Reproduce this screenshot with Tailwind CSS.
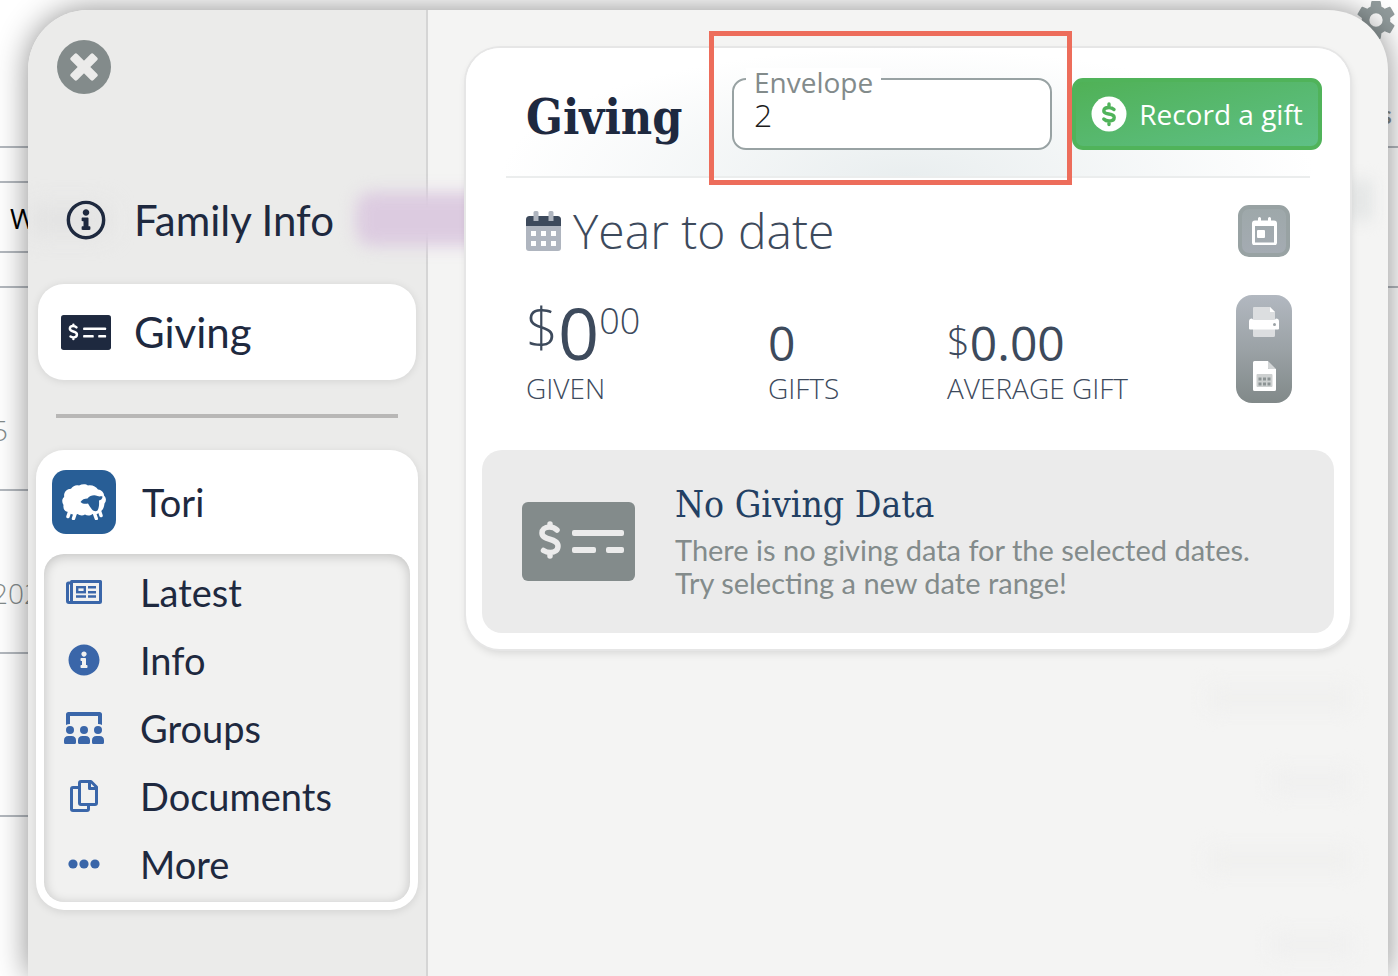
<!DOCTYPE html>
<html lang="en">
  <head>
    <meta charset="utf-8" />
    <meta content="width=device-width, initial-scale=1" name="viewport" />
    <title>Giving</title>
    <script src="https://cdn.jsdelivr.net/npm/@tailwindcss/browser@4"></script>
  </head>

  <body
    class="relative h-screen overflow-hidden bg-white font-['Open_Sans',sans-serif] text-[#1e293f]"
  >
    <!-- Shared icons -->
    <svg class="absolute h-0 w-0" aria-hidden="true">
      <symbol id="check" viewBox="0 0 113 79">
        <mask id="checkMask" maskUnits="userSpaceOnUse" x="0" y="0" width="113" height="79">
          <rect width="113" height="79" rx="6" fill="#fff" />
          <g fill="#000">
            <rect x="50" y="28" width="52" height="6" rx="2" />
            <rect x="50" y="45" width="24" height="6" rx="2" />
            <rect x="84" y="45" width="18" height="6" rx="2" />
          </g>
          <path
            d="M35 28C33 26 30 25 27.500 25C22.500 25 20 28 20 31C20 39 36 35.500 36 44C36 48.500 32.500 50.500 28.500 50.500C25 50.500 23 49.500 21.500 48.500M28 22v3M28 51v3"
            fill="none"
            stroke="#000"
            stroke-width="5.500"
            stroke-linecap="round"
          />
        </mask>
        <rect width="113" height="79" fill="currentColor" mask="url(#checkMask)" />
      </symbol>
    </svg>

    <!-- Page behind the panel -->
    <div class="h-full overflow-hidden text-2xl text-[#838b8b]">
      <header class="flex h-[148px] justify-end border-b-2 border-[#b3b8be]">
        <div class="flex w-11 flex-col items-center pt-px">
          <button type="button" aria-label="Settings" class="text-[#929c9d]">
            <svg class="h-[38px] w-[38px]" viewBox="2 2 20 20" fill="currentColor">
              <path
                d="M12 15.500A3.500 3.500 0 0 1 8.500 12A3.500 3.500 0 0 1 12 8.500a3.500 3.500 0 0 1 3.500 3.500a3.500 3.500 0 0 1-3.500 3.500m7.430-2.530c.04-.32.07-.64.07-.97c0-.33-.03-.66-.07-1l2.110-1.630c.19-.15.24-.42.12-.64l-2-3.460c-.12-.22-.39-.31-.61-.22l-2.490 1c-.52-.39-1.060-.73-1.690-.98l-.37-2.650A.506.506 0 0 0 14 2h-4c-.25 0-.46.18-.5.42l-.37 2.650c-.63.25-1.170.59-1.690.98l-2.490-1c-.22-.09-.49 0-.61.22l-2 3.460c-.13.22-.07.49.12.64L4.570 11c-.04.34-.07.67-.07 1c0 .33.03.65.07.97l-2.110 1.660c-.19.15-.25.42-.12.64l2 3.460c.12.22.39.3.61.22l2.490-1.010c.52.4 1.060.74 1.690.99l.37 2.650c.04.24.25.42.5.42h4c.25 0 .46-.18.5-.42l.37-2.650c.63-.26 1.170-.59 1.690-.99l2.490 1.010c.22.08.49 0 .61-.22l2-3.460c.12-.22.07-.49-.12-.64l-2.110-1.660Z"
              />
            </svg>
          </button>
          <span class="mt-[60px] ml-5 font-semibold">s</span>
        </div>
      </header>
      <div class="h-[35px] w-1/2 border-b-2 border-[#b3b8be]"></div>
      <div
        class="flex h-[70px] w-1/2 items-center border-b-2 border-[#b3b8be] pt-1 pl-[10px] text-[28px] text-black"
      >
        W
      </div>
      <div class="h-[35px] border-b-2 border-[#b3b8be]"></div>
      <div
        class="flex h-[203px] w-1/2 items-end border-b-2 border-[#b3b8be] pb-10 text-[28px] font-light"
      >
        <span class="-ml-2">5</span>
      </div>
      <div
        class="flex h-[163px] w-1/2 items-end border-b-2 border-[#b3b8be] pb-10 text-[28px] font-light"
      >
        <span class="-ml-2">2025</span>
      </div>
      <div class="h-[163px] w-1/2 border-b-2 border-[#b3b8be]"></div>
    </div>

    <!-- Panel -->
    <div
      class="absolute top-[10px] right-[10px] bottom-0 left-7 flex overflow-hidden rounded-t-[60px] bg-[#f4f4f3] shadow-[0_0_32px_rgba(0,0,0,0.45)]"
    >
      <!-- Soft shapes showing through the panel -->
      <div class="pointer-events-none absolute inset-0" aria-hidden="true">
        <div class="absolute top-[182px] left-[328px] z-10 h-[54px] w-48 rounded-2xl bg-[#dccbe0] blur-[8px]"></div>
        <div class="absolute top-[196px] left-0 z-10 h-7 w-20 bg-[#e2e2e2] blur-[12px]"></div>
        <div class="absolute top-[170px] right-4 h-10 w-6 bg-[#e3e5e5] blur-[8px]"></div>
        <div class="absolute top-[678px] right-9 h-5 w-36 bg-[#efefee] blur-[10px]"></div>
        <div class="absolute top-[762px] right-9 h-5 w-20 bg-[#efefef] blur-[10px]"></div>
        <div class="absolute top-[840px] right-9 h-5 w-36 bg-[#efefee] blur-[10px]"></div>
        <div class="absolute top-[925px] right-9 h-5 w-20 bg-[#efefef] blur-[10px]"></div>
      </div>

      <!-- Sidebar -->
      <aside
        class="w-[400px] shrink-0 border-r-2 border-[#d5d5d5] bg-[#ebebea] px-2 pt-[30px] font-[Lato,sans-serif] text-[42px]"
      >
        <button
          type="button"
          aria-label="Close"
          class="ml-[21px] flex h-[54px] w-[54px] items-center justify-center rounded-full bg-[#838b8b] text-[#ebebea]"
        >
          <svg class="h-7 w-7" viewBox="0 0 28 28" fill="currentColor">
            <rect x="-2" y="9.500" width="32" height="9" rx="2" transform="rotate(45 14 14)" />
            <rect x="-2" y="9.500" width="32" height="9" rx="2" transform="rotate(-45 14 14)" />
          </svg>
        </button>

        <nav class="relative z-20 mx-[2px] mt-[78px] space-y-4">
          <a href="#" class="flex h-24 items-center gap-[23px] pl-[23px]">
            <span class="flex w-[50px] justify-center">
              <svg class="h-10 w-10" viewBox="0 0 512 512" fill="currentColor">
                <circle cx="256" cy="256" r="226" fill="none" stroke="currentColor" stroke-width="44" />
                <path
                  d="M256 118c23.196 0 42 18.804 42 42s-18.804 42-42 42-42-18.804-42-42 18.804-42 42-42zm56 254c0 6.627-5.373 12-12 12h-88c-6.627 0-12-5.373-12-12v-24c0-6.627 5.373-12 12-12h12v-64h-12c-6.627 0-12-5.373-12-12v-24c0-6.627 5.373-12 12-12h64c6.627 0 12 5.373 12 12v100h12c6.627 0 12 5.373 12 12v24z"
                />
              </svg>
            </span>
            Family Info
          </a>
          <a
            href="#"
            aria-current="page"
            class="flex h-24 items-center gap-[23px] rounded-[26px] bg-white pl-[23px] shadow-[0_1px_8px_rgba(0,0,0,0.1)]"
          >
            <svg class="h-[35px] w-[50px]"><use href="#check" /></svg>
            Giving
          </a>
        </nav>

        <hr class="mx-5 mt-[34px] mb-8 border-t-4 border-[#b8b7b6]" />

        <section class="rounded-[28px] bg-white p-2 text-[38px] shadow-[0_2px_8px_rgba(0,0,0,0.1)]">
          <a href="#" class="flex h-24 items-center gap-[26px] px-2 pb-2">
            <span class="flex h-16 w-16 items-center justify-center rounded-[14px] bg-[#285e96] text-white">
              <svg class="h-9 w-11" viewBox="0 0 44 36" fill="currentColor">
                <path
                  d="M7.500 28l-1.500 4.500M13 30l-1.500 4.500M32.500 29.500l1.800 5M37.500 27l1.500 4.500"
                  stroke="currentColor"
                  stroke-width="3.500"
                  stroke-linecap="round"
                />
                <path
                  d="M1.500 21C-.5 18 0 14.500 2.200 13C1.500 8.500 4.500 5 9 4.800C11 1.800 14 .5 17 1.500C20-.3 24-.3 26 1.500C30 .6 34 2.500 36 5.500C40 6 42 9 42 11.500C44.500 14 44.500 17 42.500 19.500C42 24 40.500 27 38 27.500C36 30.500 33 31 30.500 30C28 32 25 31.800 23 30.500C20.500 32 17.500 31.500 15.500 30C12 31.500 8.500 30.500 7 28C3 28 .8 25 1.500 21Z"
                />
                <path
                  d="M18.500 18C20 15.500 22.500 14.500 25.500 14.500C28 11.500 32 10.500 35.500 12C37.500 12.800 39 12 40.500 12.500C40.500 14.800 39 16.200 37 16.500C37.300 20.500 37 24 35.500 26.500C34 27.800 31.500 27.300 30 25.500C28.500 23.500 27 21.500 26 19.500C23.500 20 20.500 20 18.500 18Z"
                  fill="#285e96"
                />
              </svg>
            </span>
            Tori
          </a>
          <nav
            class="rounded-[20px] bg-[#f1f1f0] py-1 shadow-[inset_0_2px_12px_rgba(0,0,0,0.2)]"
          >
            <a href="#" class="flex h-[68px] items-center gap-9 pl-5">
              <span class="flex w-10 justify-center text-[#3a66a9]">
                <svg class="h-6 w-9" viewBox="0 0 36 24" fill="none" stroke="currentColor">
                  <path d="M5.500 3H2.500Q1.500 3 1.500 4V21Q1.500 22.500 3 22.500H33.500Q34.500 22.500 34.500 21.500V1.500H5.500V22" stroke-width="3" stroke-linejoin="round" />
                  <rect x="11.200" y="7.200" width="7.600" height="5" stroke-width="2.400" />
                  <path d="M22 7.300h8M22 12.200h8M22 16.500h8M10 16.500h10" stroke-width="2.600" />
                </svg>
              </span>
              Latest
            </a>
            <a href="#" class="flex h-[68px] items-center gap-9 pl-5">
              <span class="flex w-10 justify-center text-[#3a66a9]">
                <svg class="h-8 w-8" viewBox="0 0 512 512" fill="currentColor">
                  <path
                    d="M256 8C119.043 8 8 119.083 8 256c0 136.997 111.043 248 248 248s248-111.003 248-248C504 119.083 392.957 8 256 8zm0 110c23.196 0 42 18.804 42 42s-18.804 42-42 42-42-18.804-42-42 18.804-42 42-42zm56 254c0 6.627-5.373 12-12 12h-88c-6.627 0-12-5.373-12-12v-24c0-6.627 5.373-12 12-12h12v-64h-12c-6.627 0-12-5.373-12-12v-24c0-6.627 5.373-12 12-12h64c6.627 0 12 5.373 12 12v100h12c6.627 0 12 5.373 12 12v24z"
                  />
                </svg>
              </span>
              Info
            </a>
            <a href="#" class="flex h-[68px] items-center gap-9 pl-5">
              <span class="flex w-10 justify-center text-[#3a66a9]">
                <svg class="h-8 w-10" viewBox="0 0 40 32" fill="currentColor">
                  <path d="M2 13V2.500Q2 0 4.500 0H35.500Q38 0 38 2.500V13Q36.500 12 34 12V4H6V12Q3.500 12 2 13Z" />
                  <circle cx="6" cy="18" r="4" />
                  <circle cx="20" cy="18" r="4" />
                  <circle cx="34" cy="18" r="4" />
                  <path d="M0 28.500Q0 24 4.500 24h3Q12 24 12 28.500V30.500Q12 32 10.500 32h-9Q0 32 0 30.500ZM14 28.500Q14 24 18.500 24h3Q26 24 26 28.500V30.500Q26 32 24.500 32h-9Q14 32 14 30.500ZM28 28.500Q28 24 32.500 24h3Q40 24 40 28.500V30.500Q40 32 38.500 32h-9Q28 32 28 30.500Z" />
                </svg>
              </span>
              Groups
            </a>
            <a href="#" class="flex h-[68px] items-center gap-9 pl-5">
              <span class="flex w-10 justify-center text-[#3a66a9]">
                <svg class="h-8 w-7" viewBox="0 0 28 32" fill="none" stroke="currentColor" stroke-width="3" stroke-linejoin="round">
                  <path d="M9 7.500H3Q1.500 7.500 1.500 9V29Q1.500 30.500 3 30.500H17Q18.500 30.500 18.500 29V25" />
                  <path d="M11 1.500H21L26.500 7V23Q26.500 24.500 25 24.500H11Q9.500 24.500 9.500 23V3Q9.500 1.500 11 1.500Z" />
                  <path d="M19.500 2V8.500H26" />
                </svg>
              </span>
              Documents
            </a>
            <a href="#" class="flex h-[68px] items-center gap-9 pl-5">
              <span class="flex w-10 justify-center text-[#3a66a9]">
                <svg class="h-[10px] w-8" viewBox="0 0 32 10" fill="currentColor">
                  <circle cx="5" cy="5" r="4.600" />
                  <circle cx="16" cy="5" r="4.600" />
                  <circle cx="27" cy="5" r="4.600" />
                </svg>
              </span>
              More
            </a>
          </nav>
        </section>
      </aside>

      <!-- Giving card -->
      <main class="min-w-0 grow px-[38px] pt-[38px]">
        <article
          class="relative z-20 rounded-[34px] bg-white pb-4 text-[#3d4a5c] shadow-[0_0_0_2px_#e6e6e6,1px_4px_8px_rgba(0,0,0,0.12)]"
        >
          <header
            class="flex h-[128px] items-start gap-5 rounded-t-[34px] bg-[radial-gradient(ellipse_46%_100%_at_50%_100%,#e9eeef,#ffffff)] pt-[30px] pr-7 pl-[60px]"
          >
            <h1
              class="grow font-['DejaVu_Serif_Condensed','DejaVu_Serif',serif] text-5xl leading-[78px] font-bold text-[#1e293f]"
            >
              Giving
            </h1>
            <div class="relative h-[72px] w-80 shrink-0">
              <label
                for="envelope"
                class="absolute -top-[10px] left-[14px] bg-white px-2 text-[28px] leading-7 text-[#838b8b]"
                >Envelope</label
              >
              <input
                id="envelope"
                type="text"
                value="2"
                class="h-full w-full rounded-[14px] border-2 border-[#98a2a3] bg-white px-5 text-[32px] font-light text-[#1c1c1c]"
              />
              <!-- Highlight around the envelope field -->
              <div class="pointer-events-none absolute -top-[47px] -right-5 -bottom-[35px] -left-[23px] border-5 border-[#ed6d5b]"></div>
            </div>
            <button
              type="button"
              class="flex h-[72px] w-[250px] shrink-0 items-center justify-center gap-3 rounded-[11px] border-4 border-[#50b35a] bg-linear-to-br from-[#50b156] to-[#5fc086] text-[28px] text-white"
            >
              <svg class="h-9 w-9" viewBox="0 0 36 36" fill="none">
                <circle cx="18" cy="18" r="17.500" fill="#fff" />
                <path
                  d="M23 13.500C21.500 12 19.500 11.500 18 11.500C14.500 11.500 12.800 13 12.800 15C12.800 19.500 23.200 16.500 23.200 21.500C23.200 24 21 25 18 25C16 25 14 24.300 12.800 23M18 8v3.500M18 25v3.500"
                  stroke="#50b35a"
                  stroke-width="3.400"
                  stroke-linecap="round"
                />
              </svg>
              Record a gift
            </button>
          </header>
          <hr class="mx-10 border-t-2 border-[#ebeded]" />

          <div class="mt-[27px] flex h-[52px] items-center gap-3 px-[60px]">
            <svg class="h-10 w-[35px]" viewBox="0 0 35 40">
              <path d="M0 15h35v22q0 3-3 3H3q-3 0-3-3Z" fill="#afb5bf" />
              <path d="M0 15V8.500Q0 5 3.500 5h28Q35 5 35 8.500V15Z" fill="#3d4a5c" />
              <path d="M7.500 1.500q0-1.500 1.500-1.500h2q1.500 0 1.500 1.500V10h-5ZM22.500 1.500q0-1.500 1.500-1.500h2q1.500 0 1.500 1.500V10h-5Z" fill="#afb5bf" />
              <path d="M5 20h5v5h-5ZM15 20h5v5h-5ZM25 20h5v5h-5ZM5 30h5v5h-5ZM15 30h5v5h-5ZM25 30h5v5h-5Z" fill="#fff" />
            </svg>
            <h2 class="grow text-5xl font-light">Year to date</h2>
            <button
              type="button"
              aria-label="Choose dates"
              class="flex h-[52px] w-[52px] items-center justify-center rounded-[11px] border-4 border-[#98a2a3] bg-linear-to-b from-[#9ea8aa] to-[#a4abb2]"
            >
              <svg class="h-7 w-[25px]" viewBox="0 0 25 28" fill="#fff">
                <path d="M3 3.500h3V1.500q0-1.500 1.500-1.500t1.500 1.500v2h7v-2q0-1.500 1.500-1.500t1.500 1.500v2h3q3 0 3 3v19q0 3-3 3H3q-3 0-3-3v-19q0-3 3-3ZM3 9v16.500h19V9Z" fill-rule="evenodd" />
                <rect x="5" y="13" width="8" height="8" rx="1" />
              </svg>
            </button>
          </div>

          <div class="mt-[38px] flex h-[108px] pr-[58px] pl-[60px]">
            <dl class="flex grow items-start">
              <div class="flex w-[242px] flex-col-reverse">
                <dt class="text-[28px] leading-7 font-light">GIVEN</dt>
                <dd class="flex h-[79px] items-start">
                  <span class="text-[56px] leading-[60px] font-light">$</span>
                  <span class="text-7xl leading-[74px] font-medium">0</span>
                  <span class="text-4xl leading-[52px] font-light">00</span>
                </dd>
              </div>
              <div class="flex w-[179px] flex-col-reverse">
                <dt class="text-[28px] leading-7 font-light">GIFTS</dt>
                <dd class="flex h-[79px] items-end text-5xl leading-[62px] font-medium">0</dd>
              </div>
              <div class="flex flex-col-reverse">
                <dt class="text-[28px] leading-7 font-light">AVERAGE GIFT</dt>
                <dd class="flex h-[79px] items-end">
                  <span class="text-[40px] leading-[66px] font-light">$</span>
                  <span class="text-5xl leading-[62px] font-medium">0.00</span>
                </dd>
              </div>
            </dl>
            <div
              class="flex w-14 flex-col items-center justify-between rounded-2xl bg-linear-to-b from-[#b2b8c0] via-[#9ba2a6] to-[#818989] py-3"
            >
              <button type="button" aria-label="Print">
                <svg class="h-[30px] w-[30px]" viewBox="0 0 30 30" fill="#fff">
                  <path d="M4 1q0-1 1-1h16l5 5v9H4ZM4 21h22v7.500q0 1.500-1.500 1.500h-19Q4 30 4 28.500Z" fill="#dcdee0" />
                  <path d="M21 0l5 5h-5ZM0 14.500Q0 11.500 3 11.500q1 1.500 2.500 1.500h19q1.500 0 2.500-1.500q3 0 3 3v7q0 1-1 1H1q-1 0-1-1Z" />
                  <circle cx="25.500" cy="17.500" r="1.500" fill="#9ba2a6" />
                </svg>
              </button>
              <button type="button" aria-label="Export">
                <svg class="h-[30px] w-[23px]" viewBox="0 0 23 30" fill="#fff">
                  <path d="M0 1.500Q0 0 1.500 0H15v6.500Q15 8 16.500 8H23V28.500Q23 30 21.500 30h-20Q0 30 0 28.500Z" />
                  <path d="M15 0l8 8h-6.500Q15 8 15 6.500Z" fill="#d3d6d7" />
                  <rect x="3.500" y="13" width="16" height="13" rx="1" fill="#cdd0d0" />
                  <path d="M5.500 16.500h3v3h-3ZM10 16.500h3v3h-3ZM14.500 16.500h3v3h-3ZM5.500 21.500h3v3h-3ZM10 21.500h3v3h-3ZM14.500 21.500h3v3h-3Z" fill="#8c9394" />
                </svg>
              </button>
            </div>
          </div>

          <!-- Empty state -->
          <section class="mx-4 mt-[47px] flex h-[183px] items-center gap-10 rounded-[20px] bg-[#ebebeb] px-10">
            <svg class="h-[79px] w-[113px] shrink-0 text-[#838b8b]"><use href="#check" /></svg>
            <div class="font-[Lato,sans-serif]">
              <h3
                class="mb-2 font-['DejaVu_Serif_Condensed','DejaVu_Serif',serif] text-[37px] leading-10 text-[#234063]"
              >
                No Giving Data
              </h3>
              <p class="text-[29px] leading-[33px] text-[#838b8b]">
                There is no giving data for the selected dates.<br />
                Try selecting a new date range!
              </p>
            </div>
          </section>
        </article>
      </main>
    </div>
  </body>
</html>
